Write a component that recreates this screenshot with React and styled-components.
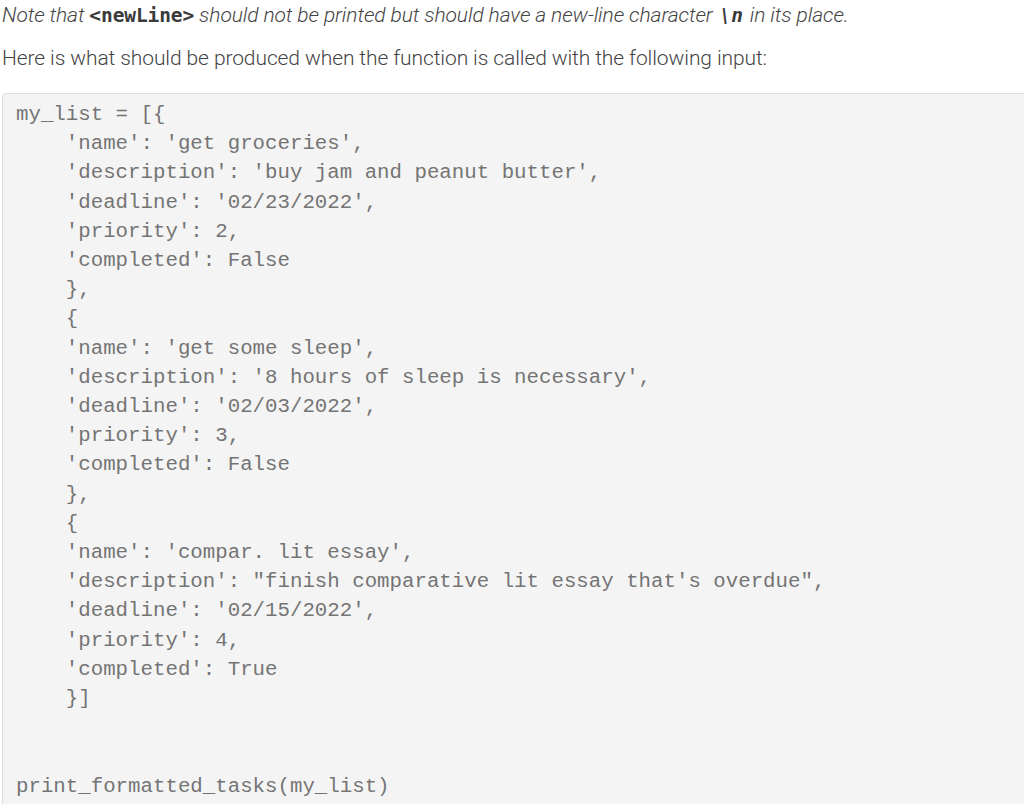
import React from "react";
import styled, { createGlobalStyle } from "styled-components";

const Global = createGlobalStyle`
  html, body { margin: 0; padding: 0; background: #fff; overflow: hidden; }
  body { font-family: Roboto, "Noto Sans", sans-serif; }
`;

const Page = styled.div`
  width: 1024px;
  height: 804px;
  overflow: hidden;
  padding-left: 2px;
  box-sizing: border-box;
`;

const Para = styled.p`
  margin: 0 0 ${(p) => p.$gap || 0}px 0;
  font-size: 21px;
  line-height: 30px;
  font-weight: 300;
  font-style: ${(p) => (p.$italic ? "italic" : "normal")};
  color: #444;
  white-space: nowrap;
  letter-spacing: -0.1px;
`;

const InlineCode = styled.code`
  font-family: "DejaVu Sans Mono", monospace;
  font-weight: 700;
  font-style: ${(p) => (p.$slanted ? "italic" : "normal")};
  font-size: 19.5px;
  color: #3a3a3a;
  padding: 0 ${(p) => (p.$pad ? 2 : 0)}px;
`;

const CodeBlock = styled.pre`
  margin: 0 -40px 0 0;
  padding: 6px 13px 40px 13px;
  background: #f4f4f4;
  border: 1px solid #dcdcdc;
  border-radius: 4px;
  font-family: "Liberation Mono", "Courier New", monospace;
  font-size: 20.75px;
  line-height: 29.2px;
  color: #747474;
  white-space: pre;
`;

const code = `my_list = [{
    'name': 'get groceries',
    'description': 'buy jam and peanut butter',
    'deadline': '02/23/2022',
    'priority': 2,
    'completed': False
    },
    {
    'name': 'get some sleep',
    'description': '8 hours of sleep is necessary',
    'deadline': '02/03/2022',
    'priority': 3,
    'completed': False
    },
    {
    'name': 'compar. lit essay',
    'description': "finish comparative lit essay that's overdue",
    'deadline': '02/15/2022',
    'priority': 4,
    'completed': True
    }]


print_formatted_tasks(my_list)`;

export default function App() {
  return (
    <>
      <Global />
      <Page>
        <Para $italic $gap={12}>
          Note that <InlineCode>&lt;newLine&gt;</InlineCode> should not be printed but should
          have a new-line character <InlineCode $slanted $pad>\n</InlineCode> in its place.
        </Para>
        <Para $gap={20}>
          Here is what should be produced when the function is called with the following input:
        </Para>
        <CodeBlock>{code}</CodeBlock>
      </Page>
    </>
  );
}
